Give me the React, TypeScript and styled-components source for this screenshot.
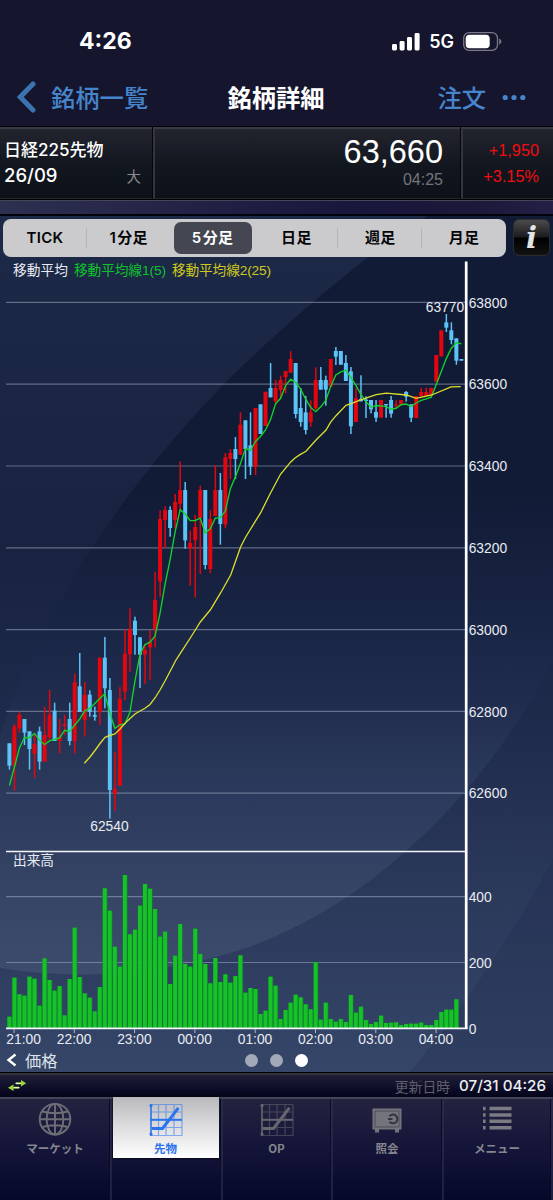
import React from "react";
import styled, { createGlobalStyle } from "styled-components";

const CJK = '"Noto Sans CJK JP", sans-serif';
const SANS = `"Liberation Sans", ${CJK}`;
const UI = `Inter, ${CJK}`;

const GlobalStyle = createGlobalStyle`
  * { box-sizing: border-box; }
  body { margin: 0; background: #05072a; font-family: ${SANS}; }
`;

const Screen = styled.div`
  display: flex;
  flex-direction: column;
  width: 553px;
  height: 1200px;
  overflow: hidden;
  background: #15152d;
  color: #fff;
  white-space: nowrap;
`;

/* ---------- device status bar and navigation ---------- */

const StatusBar = styled.div`
  display: flex;
  align-items: center;
  height: 70px;
  padding: 12px 51px 0 79px;
  font-family: ${UI};
`;
const Clock = styled.span`
  font-size: 23px;
  font-weight: 700;
  letter-spacing: 0;
`;
const Signals = styled.div`
  display: flex;
  align-items: center;
  gap: 9px;
  margin-left: auto;
`;
const Network = styled.span`
  font-size: 18px;
  font-weight: 600;
  letter-spacing: 0;
  line-height: 22px;
  padding-top: 2px;
`;

const NavBar = styled.div`
  display: grid;
  grid-template-columns: 1fr auto 1fr;
  align-items: center;
  height: 56px;
  padding: 0 27px 2px 17px;
`;
const NavSide = styled.div<{ $end?: boolean }>`
  display: flex;
  align-items: center;
  justify-content: ${(p) => (p.$end ? "flex-end" : "flex-start")};
  gap: ${(p) => (p.$end ? 16 : 14)}px;
  color: #4684cc;
  font: 500 24.3px/36px ${CJK};
`;
const NavTitle = styled.div`
  font: 700 24.3px/36px ${CJK};
  padding-left: 9px;
`;

/* ---------- quote header ---------- */

const Quote = styled.div`
  display: grid;
  grid-template-columns: 153px 308px 1fr;
  height: 74px;
  border-top: 1px solid #000;
  border-bottom: 1px solid #000;
  background: linear-gradient(#23252f, #12161f 55%, #0d1118);
`;
const QuoteCell = styled.div<{ $edge?: boolean }>`
  display: flex;
  flex-direction: column;
  border-top: 2px solid #3a3b45;
  border-bottom: 1px solid #25272f;
  border-left: ${(p) => (p.$edge ? "2px solid #34353d" : "none")};
  box-shadow: ${(p) => (p.$edge ? "-1px 0 0 #05060a" : "none")};
`;
const NameCell = styled(QuoteCell)`
  padding: 9px 12px 0 4px;
  font: 500 17px/25px ${UI};
`;
const ContractLine = styled.div`
  display: flex;
  justify-content: space-between;
  font-size: 18.5px;
`;
const Size = styled.span`
  color: #8b8c92;
  font: 400 14.5px/25px ${CJK};
`;
const PriceCell = styled(QuoteCell)`
  align-items: flex-end;
  padding: 5px 18px 0 0;
`;
const Price = styled.div`
  font-size: 32.5px;
  line-height: 36px;
`;
const PriceTime = styled.div`
  font-size: 16px;
  line-height: 19px;
  color: #73747c;
`;
const ChangeCell = styled(QuoteCell)`
  align-items: flex-end;
  padding: 8px 14px 0 0;
  font-size: 16.3px;
  line-height: 26px;
  color: #f10d12;
`;
const Band = styled.div`
  height: 16px;
  border-top: 1px solid #45465a;
  border-bottom: 2px solid #02030c;
  background: linear-gradient(90deg, #2e3050, #17163c 65%, #1c1839 85%, #241f45);
`;

/* ---------- chart panel ---------- */

const Panel = styled.section`
  position: relative;
  display: flex;
  flex-direction: column;
  height: 856px;
  overflow: hidden;
`;
const Backdrop = styled.svg`
  position: absolute;
  inset: 0;
`;
const Toolbar = styled.div`
  position: relative;
  display: flex;
  gap: 7px;
  padding: 3px 3px 0;
`;
const Segments = styled.div`
  display: grid;
  grid-template-columns: repeat(6, 1fr);
  width: 503px;
  height: 38px;
  padding: 3px 0;
  border-radius: 8px;
  background: #cbcbcd;
`;
const Segment = styled.button<{ $active?: boolean; $line?: boolean }>`
  position: relative;
  border: 0;
  margin: 0 3px;
  padding: 0 0 1px;
  border-radius: 7px;
  background: ${(p) => (p.$active ? "#444751" : "transparent")};
  color: ${(p) => (p.$active ? "#fff" : "#050507")};
  font: 600 15px/30px ${UI};
  letter-spacing: 0.3px;
  word-spacing: -3px;
  &::after {
    content: "";
    position: absolute;
    right: -3px;
    top: 6px;
    width: 1px;
    height: 20px;
    background: ${(p) => (p.$line ? "#b4b4b8" : "transparent")};
  }
`;
const InfoButton = styled.button`
  width: 37px;
  height: 37px;
  padding: 0;
  border: 1px solid #2b2c31;
  border-radius: 6px;
  background: linear-gradient(#4b4b4d, #1c1c1d 48%, #000 52%, #131314);
  color: #e4e4e4;
  font: italic 700 29px/32px "DejaVu Serif", serif;
`;
const ChartSvg = styled.svg`
  position: relative;
  display: block;
  font-family: ${SANS};
  fill: #e8ebf2;
  font-size: 13.8px;
`;
const Footer = styled.div`
  position: relative;
  display: grid;
  grid-template-columns: 1fr auto 1fr;
  align-items: center;
  height: 24px;
  padding: 0 6px;
`;
const BackLink = styled.div`
  display: flex;
  align-items: center;
  gap: 8px;
  color: #dfe3eb;
  font: 400 16.3px/22px ${CJK};
`;
const Dots = styled.div`
  display: flex;
  gap: 12px;
`;
const Dot = styled.i<{ $on?: boolean }>`
  width: 13px;
  height: 13px;
  border-radius: 50%;
  background: ${(p) => (p.$on ? "#fff" : "#a2a9b8")};
`;

/* ---------- bottom bars ---------- */

const UpdateBar = styled.div`
  display: flex;
  align-items: center;
  height: 25px;
  padding: 1px 7px 0 8px;
  border-top: 1px solid #000;
  box-shadow: inset 0 2px 0 #32323f;
  background: linear-gradient(#22213a, #0a0a24 75%, #05051a);
`;
const UpdateLabel = styled.span`
  margin-left: auto;
  margin-right: 9px;
  color: #5f606b;
  font: 400 13.8px/22px ${CJK};
`;
const UpdateTime = styled.span`
  color: #eceef2;
  font: 500 15.2px/22px ${UI};
`;
const Tabs = styled.nav`
  display: grid;
  grid-template-columns: 111px 111px 110px 111px 1fr;
  flex: 1;
  background: linear-gradient(#242340, #16163a 45%, #05082a);
`;
const Tab = styled.div<{ $last?: boolean }>`
  border-top: 2px solid #45455a;
  border-right: 2px solid #30315099;
  box-shadow: inset -1px 0 0 #0b0b24;
  margin-right: ${(p) => (p.$last ? 0 : -1)}px;
`;
const TabFace = styled.div<{ $active?: boolean }>`
  display: flex;
  flex-direction: column;
  align-items: center;
  width: ${(p) => (p.$active ? "106px" : "auto")};
  height: 61px;
  margin: -2px 0 0 ${(p) => (p.$active ? 1.5 : 0)}px;
  padding-top: 5px;
  background: ${(p) => (p.$active ? "linear-gradient(#b9b9bd, #dedee0 50%, #fff)" : "none")};
  color: ${(p) => (p.$active ? "#2a72ee" : "#85868d")};
  box-shadow: ${(p) => (p.$active ? "0 0 2px #000" : "none")};
  font: 700 11.5px/16px ${CJK};
`;
const TabIcon = styled.svg`
  margin-bottom: 2px;
`;

/* ---------- data: screen-space levels of each five-minute bar ---------- */

type Bar = [up: 0 | 1, high: number, top: number, bottom: number, low: number];

const at = (origin: number, bars: Bar[]): Bar[] =>
  bars.map(([u, ...v]) => [u, ...v.map((n) => origin + n / 3)] as Bar);

const bars: Bar[] = [
  ...at(620, [
    [0, 370, 370, 437, 449], [1, 312, 320, 437, 512], [1, 275, 284, 325, 338], [0, 297, 297, 338, 375],
    [0, 334, 334, 387, 449], [1, 345, 372, 401, 474], [0, 320, 334, 425, 449], [1, 260, 345, 425, 425],
    [1, 210, 284, 352, 360], [0, 248, 272, 363, 363], [1, 297, 350, 363, 400], [1, 285, 312, 317, 345],
    [0, 248, 297, 363, 376], [1, 161, 187, 363, 400], [0, 99, 199, 276, 276], [1, 186, 224, 300, 350],
    [0, 211, 224, 276, 290], [0, 260, 285, 290, 302], [1, 113, 113, 275, 314], [0, 51, 113, 205, 265],
    [0, 174, 210, 510, 596], [1, 395, 507, 521, 572], [1, 201, 237, 497, 497], [1, 28, 101, 215, 240],
    [1, -35, 28, 103, 155], [0, -10, 2, 45, 104], [0, 52, 52, 104, 204], [1, 72, 90, 104, 192],
  ]),
  ...at(440, [
    [1, 570, 605, 622, 720], [1, 396, 480, 568, 622], [1, 211, 237, 424, 471], [1, 199, 210, 240, 324],
    [0, 199, 210, 264, 290], [1, 162, 186, 240, 265], [1, 64, 150, 191, 215], [0, 126, 150, 301, 326],
    [1, 272, 309, 325, 437], [1, 225, 261, 301, 472], [1, 137, 150, 235, 402], [0, 150, 150, 375, 388],
    [1, 211, 237, 387, 400], [1, 75, 150, 228, 228], [0, 99, 150, 252, 314], [1, 39, 52, 253, 265],
  ]),
  ...at(330, [
    [1, 357, 369, 387, 447], [0, 321, 357, 387, 447], [1, 247, 284, 374, 374], [0, 271, 271, 357, 447],
    [0, 247, 346, 410, 435], [1, 234, 234, 410, 435], [0, 223, 223, 312, 312], [1, 184, 186, 288, 288],
    [0, 99, 174, 202, 202], [1, 150, 174, 214, 225], [1, 137, 150, 180, 205], [1, 123, 123, 141, 190],
    [1, 64, 87, 128, 128], [0, 99, 99, 252, 265], [0, 174, 234, 276, 290], [0, 198, 247, 300, 313],
    [1, 211, 247, 276, 290], [1, 112, 150, 235, 240], [0, 111, 150, 179, 179], [0, 137, 150, 179, 227],
    [1, 87, 87, 170, 170], [0, 51, 63, 80, 105], [0, 63, 63, 104, 104], [0, 75, 99, 153, 153],
    [0, 111, 124, 289, 312], [1, 174, 205, 276, 276], [0, 136, 207, 214, 214], [0, 199, 209, 213, 264],
    [0, 210, 210, 238, 250],
  ]),
  ...at(290, [
    [0, 330, 366, 383, 396], [1, 330, 330, 383, 383], [0, 342, 342, 346, 383], [0, 318, 330, 371, 383],
    [1, 331, 344, 348, 357], [1, 330, 330, 345, 345], [0, 303, 306, 320, 335], [0, 343, 343, 383, 396],
    [1, 318, 318, 384, 384], [1, 293, 306, 318, 321], [1, 293, 306, 318, 318], [1, 293, 294, 316, 321],
    [1, 195, 195, 275, 275], [1, 121, 121, 199, 199], [0, 72, 97, 113, 126], [0, 97, 121, 150, 163],
    [0, 145, 145, 212, 224], [0, 207, 207, 212, 212],
  ]),
];

const barX = (i: number) => 9.4 + i * 5.022;

const closes = bars.map(([up, , top, bottom]) => (up ? top : bottom));
const shortAverage = closes
  .map((_, i) => {
    const y =
      i < 4
        ? [785.5, 767, 748, 737.5][i]
        : closes.slice(i - 4, i + 1).reduce((a, b) => a + b, 0) / 5;
    return `${barX(i)},${y}`;
  })
  .join(" ");

const longAverage =
  "84.3,763.3 90,757 95,750.5 100,743.5 105,737.3 110,735.3 115,734 120,729 125,723.3 130,718.5 135,714 140,711 145,708.3 150,704.5 155,698 160,690 165,681 170,671.5 176,660 180.3,653.3 190.3,638 195.3,630 200.3,622 210.6,609.5 220.7,592.7 230.7,575 235.7,560.7 240.7,546.7 245.7,537 260.7,512.7 270,494 280.5,474.3 290.5,462.2 295,458 300,454.6 306,451.3 316,440 326,430 331,421.7 336,415.7 346,405.3 351,403.7 361.3,399.6 376.3,394.7 386.3,393.2 406.3,395 416.3,398.3 431.7,395 451,386.8 460.7,386.6";

const volumeTops = [
  530, 413, 463, 467, 410, 416, 497, 355, 420, 452, 438, 526, 417, 263, 411, 460, 473, 514, 441, 145, 212, 320,
  380, 105, 283, 269, 197, 132, 146, 207, 290, 275, 432, 347, 252, 372, 380, 266, 342, 372, 430, 354, 426, 403,
  428, 408, 346, 458, 444, 447, 522, 512, 410, 437, 537, 510, 488, 464, 472, 493, 508, 366, 539, 488, 537, 545,
  537, 546, 465, 518, 500, 540, 552, 546, 527, 549, 548, 547, 555, 552, 551, 551, 548, 555, 555, 540, 516, 509,
  509, 478,
].map((v) => 840 + v / 3);

const priceTicks: [string, number][] = [
  ["63800", 302.3], ["63600", 384.2], ["63400", 466], ["63200", 547.8], ["63000", 629.6], ["62800", 711.3],
  ["62600", 793.2],
];
const volumeTicks: [string, number][] = [["400", 896.6], ["200", 962.5], ["0", 1028.5]];
const hours = ["21:00", "22:00", "23:00", "00:00", "01:00", "02:00", "03:00", "04:00"];

const Chart = () => (
  <ChartSvg width="553" height="791" viewBox="0 257 553 791">
    {[...priceTicks, ...volumeTicks.slice(0, 2)].map(([t, y]) => (
      <path key={t} d={`M6 ${y}H465`} stroke="#aab4cc" strokeOpacity=".5" strokeWidth="1.2" />
    ))}
    <text x="13" y="274.5" fontSize="13.7" textLength="55">移動平均</text>
    <text x="74" y="274.5" fontSize="13.7" fill="#0fc22c" textLength="92">移動平均線1(5)</text>
    <text x="172" y="274.5" fontSize="13.7" fill="#cfc81d" textLength="99">移動平均線2(25)</text>
    <text x="13" y="864.5" fontSize="13.7" textLength="41">出来高</text>

    {volumeTops.map((y, i) => (
      <g key={i}>
        <rect x={barX(i) - 2.3} y={y} width="5" height={1028 - y} fill="#0f7d38" />
        <rect x={barX(i) - 2} y={y} width="3.9" height={1028 - y} fill="#17c226" />
      </g>
    ))}
    {bars.map(([up, high, top, bottom, low], i) => (
      <g key={i} fill={up ? "#e3060e" : "#5cc3f7"}>
        <rect x={barX(i) - 0.7} y={high} width="1.5" height={low - high} />
        <rect x={barX(i) - 2} y={top} width="4" height={bottom - top} />
      </g>
    ))}
    <polyline points={shortAverage} fill="none" stroke="#12d32a" strokeWidth="1.35" />
    <polyline points={longAverage} fill="none" stroke="#dbe02c" strokeWidth="1.3" />

    <path d="M6 851.5H465M6 1028.3H467.5" stroke="#f4f6fa" strokeWidth="1.7" />
    <path d="M466.2 261.5V1029" stroke="#fff" strokeWidth="2.7" />

    {[...priceTicks, ...volumeTicks].map(([t, y]) => (
      <text key={t} x="468.7" y={y + 5.2}>{t}</text>
    ))}
    {hours.map((t, i) => (
      <g key={t}>
        <path d={`M${14 + i * 60.3} 1029v4`} stroke="#aab4cc" strokeWidth="1" />
        <text x={i ? 13.8 + i * 60.3 : 23.6} y="1043.8" textAnchor="middle">{t}</text>
      </g>
    ))}
    <text x="109.4" y="831" textAnchor="middle">62540</text>
    <text x="445" y="311.8" textAnchor="middle">63770</text>
  </ChartSvg>
);

const PanelBackdrop = () => (
  <Backdrop width="553" height="856" viewBox="0 216 553 856">
    <defs>
      <linearGradient id="outer" x1="0" y1="216" x2="0" y2="1072" gradientUnits="userSpaceOnUse">
        <stop offset="0" stopColor="#1c2947" />
        <stop offset=".4" stopColor="#182341" />
        <stop offset=".58" stopColor="#1e2a4a" />
        <stop offset=".8" stopColor="#2b395b" />
        <stop offset="1" stopColor="#354668" />
      </linearGradient>
      <linearGradient id="lens" x1="0" y1="216" x2="0" y2="980" gradientUnits="userSpaceOnUse">
        <stop offset="0" stopColor="#121b36" />
        <stop offset=".36" stopColor="#111b36" />
        <stop offset=".55" stopColor="#1a2646" />
        <stop offset=".64" stopColor="#212d4f" />
        <stop offset=".76" stopColor="#2c3b5d" />
        <stop offset="1" stopColor="#3e4c6d" />
      </linearGradient>
    </defs>
    <path d="M0 216H553V1072H0Z" fill="url(#outer)" />
    <path
      d="M427 216C365 254 282 327 230 378C130 478 40 610 0 735V968C90 982 170 972 240 950C375 905 490 785 553 660V216Z"
      fill="url(#lens)"
    />
    <path d="M553 858C520 925 462 1010 410 1072H553Z" fill="#1f2b50" fillOpacity=".28" />
  </Backdrop>
);

const GridChartIcon = ({ active }: { active?: boolean }) => {
  const ink = active ? "#2b74ee" : "#66676f";
  return (
    <TabIcon width="34" height="36" viewBox="0 0 34 36">
      <path d="M2 2.5H33M2 10H33M2 25.5H33M2 33.5H33M9.5 2.5V34M17 2.5V34M25 2.5V34M33 2.5V34" stroke={ink} strokeOpacity=".55" strokeWidth="1.2" />
      <path d="M2 2V34" stroke={ink} strokeWidth="1.6" />
      <path d="M1 17.8H33" stroke={ink} strokeWidth="2" />
      <path d="M4.5 26.5H13.5L28.5 7" fill="none" stroke={ink} strokeWidth="3" strokeLinecap="square" />
      <circle cx="2" cy="3.5" r="1.6" fill={ink} />
      <circle cx="2" cy="32" r="1.6" fill={ink} />
    </TabIcon>
  );
};

const GlobeIcon = () => (
  <TabIcon width="34" height="36" viewBox="0 0 34 36" fill="none" stroke="#6d6e76" strokeWidth="1.9">
    <circle cx="17" cy="17.2" r="15.3" />
    <ellipse cx="17" cy="17.2" rx="8.4" ry="15.3" />
    <path d="M17 2V32.5M1.7 17.2H32.3M4.2 9.5Q17 13 29.8 9.5M4.2 25Q17 21.5 29.8 25" />
  </TabIcon>
);

const SafeIcon = () => (
  <TabIcon width="34" height="36" viewBox="0 0 34 36" fill="#74757c">
    <path d="M2.5 6.5H31.5V27.5H2.5Z" />
    <path d="M5 27H9V30.5H5ZM25 27H29V30.5H25Z" />
    <path d="M5 9H29V25H5Z" fill="none" stroke="#4c4d58" strokeWidth="1" />
    <path d="M19.5 14.3A4.4 4.4 0 1 1 19.5 19.6M18 17H22.5" fill="none" stroke="#33343f" strokeWidth="2" />
  </TabIcon>
);

const ListIcon = () => (
  <TabIcon width="34" height="36" viewBox="0 0 34 36" stroke="#7b7c83" strokeWidth="3.4">
    <path d="M3 6.5H5.6M3 13H5.6M3 19.3H5.6M3 25.7H5.6M9.5 6.5H31.5M9.5 13H31.5M9.5 19.3H31.5M9.5 25.7H31.5" />
  </TabIcon>
);

export default function App() {
  return (
    <Screen>
      <GlobalStyle />
      <StatusBar>
        <Clock>4:26</Clock>
        <Signals>
          <svg width="28" height="19" viewBox="0 0 28 19" fill="#fff">
            <rect x="0" y="12" width="5" height="6.5" rx="1.4" />
            <rect x="7.6" y="9" width="5" height="9.5" rx="1.4" />
            <rect x="15" y="5" width="5" height="13.5" rx="1.4" />
            <rect x="22.6" y="1" width="5" height="17.5" rx="1.4" />
          </svg>
          <Network>5G</Network>
          <svg width="39" height="19" viewBox="0 0 39 19">
            <rect x=".7" y=".7" width="33.8" height="17.6" rx="5.4" fill="none" stroke="#7a7a8b" strokeWidth="1.3" />
            <rect x="2.7" y="2.7" width="24" height="13.6" rx="3.8" fill="#fff" />
            <path d="M36.2 6.4q2.2 1 2.2 3.1t-2.2 3.1z" fill="#7a7a8b" />
          </svg>
        </Signals>
      </StatusBar>

      <NavBar>
        <NavSide>
          <svg width="20" height="32" viewBox="0 0 20 32">
            <path d="M16 3L3.2 16L16 29" fill="none" stroke="#3b73b0" strokeWidth="5" strokeLinecap="round" />
          </svg>
          銘柄一覧
        </NavSide>
        <NavTitle>銘柄詳細</NavTitle>
        <NavSide $end>
          注文
          <svg width="24" height="7" viewBox="0 0 24 7" fill="#4684cc">
            <circle cx="3.2" cy="3.5" r="2.6" />
            <circle cx="12" cy="3.5" r="2.6" />
            <circle cx="20.8" cy="3.5" r="2.6" />
          </svg>
        </NavSide>
      </NavBar>

      <Quote>
        <NameCell>
          <div>日経225先物</div>
          <ContractLine>
            26/09<Size>大</Size>
          </ContractLine>
        </NameCell>
        <PriceCell $edge>
          <Price>63,660</Price>
          <PriceTime>04:25</PriceTime>
        </PriceCell>
        <ChangeCell $edge>
          <div>+1,950</div>
          <div>+3.15%</div>
        </ChangeCell>
      </Quote>
      <Band />

      <Panel>
        <PanelBackdrop />
        <Toolbar>
          <Segments>
            <Segment $line>TICK</Segment>
            <Segment>1 分足</Segment>
            <Segment $active>5 分足</Segment>
            <Segment $line>日足</Segment>
            <Segment $line>週足</Segment>
            <Segment>月足</Segment>
          </Segments>
          <InfoButton>i</InfoButton>
        </Toolbar>
        <Chart />
        <Footer>
          <BackLink>
            <svg width="11" height="14" viewBox="0 0 11 14">
              <path d="M9.5 1.5L2.5 7L9.5 12.5" fill="none" stroke="#fff" strokeWidth="2.4" />
            </svg>
            価格
          </BackLink>
          <Dots>
            <Dot />
            <Dot />
            <Dot $on />
          </Dots>
        </Footer>
      </Panel>

      <UpdateBar>
        <svg width="19" height="13" viewBox="0 0 19 13">
          <path d="M8 3.6H13V1L18.2 4.2L13 7.4V5.2H8ZM11 9.6H5.5V12L0 8.8L5.5 5.6V7.8H11Z" fill="#9ad83a" />
          <path d="M7.5 4.4H13M11.5 8.7H6" stroke="#e9f7c6" strokeWidth="1.2" />
        </svg>
        <UpdateLabel>更新日時</UpdateLabel>
        <UpdateTime>07/31 04:26</UpdateTime>
      </UpdateBar>

      <Tabs>
        <Tab>
          <TabFace><GlobeIcon />マーケット</TabFace>
        </Tab>
        <Tab>
          <TabFace $active><GridChartIcon active />先物</TabFace>
        </Tab>
        <Tab>
          <TabFace><GridChartIcon />OP</TabFace>
        </Tab>
        <Tab>
          <TabFace><SafeIcon />照会</TabFace>
        </Tab>
        <Tab $last>
          <TabFace><ListIcon />メニュー</TabFace>
        </Tab>
      </Tabs>
    </Screen>
  );
}
